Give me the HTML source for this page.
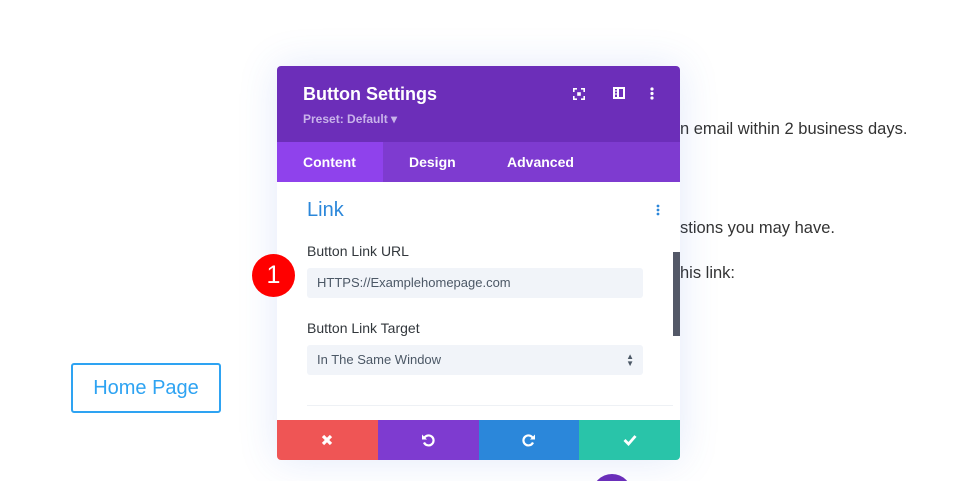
<!DOCTYPE html>
<html style="width:961px;height:481px;overflow:hidden"><head><style>
*{margin:0;padding:0;box-sizing:border-box}
body{width:961px;height:481px;background:#fff;position:relative;overflow:hidden;font-family:"Liberation Sans",sans-serif}
.t{position:absolute;font-size:16.5px;color:#333}
.modal{position:absolute;left:277px;top:66px;width:403px;height:394px;background:#fff;border-radius:4px;box-shadow:0 0 40px rgba(60,110,220,.15);overflow:hidden}
.hd{height:76px;background:#6c2eb9;position:relative}
.tabs{height:40px;background:#7e3bd0;position:relative}
.tab{position:absolute;top:0;height:40px;line-height:40px;color:#fff;font-weight:bold;font-size:14px}
.lbl{position:absolute;left:30px;font-size:14px;color:#32373c}
.inp{position:absolute;left:30px;width:336px;height:30px;background:#f1f4f9;border-radius:3px;font-size:13px;color:#4c5866;line-height:30px;padding-left:10px}
.ft{position:absolute;top:354px;height:40px;width:101px}
</style></head><body>
<div class="t" style="left:680px;top:120px">n email within 2 business days.</div>
<div class="t" style="left:680px;top:219px">stions you may have.</div>
<div class="t" style="left:680px;top:264px">his link:</div>
<div style="position:absolute;left:71px;top:363px;width:150px;height:50px;border:2px solid #2ea3f2;border-radius:3px;color:#2ea3f2;font-size:20px;line-height:46px;text-align:center">Home Page</div>
<div style="position:absolute;left:592px;top:474px;width:40px;height:7px;overflow:hidden"><div style="width:40px;height:40px;border-radius:50%;background:#6c2eb9"></div></div>
<div class="modal">
 <div class="hd">
  <div style="position:absolute;left:26px;top:18px;color:#fff;font-weight:bold;font-size:18px">Button Settings</div>
  <div style="position:absolute;left:26px;top:46px;color:#c8b3ea;font-weight:bold;font-size:12px">Preset: Default ▾</div>
  <svg style="position:absolute;left:296px;top:22px" width="12" height="12" viewBox="0 0 12 12" fill="none" stroke="#fff" stroke-width="1.6"><path d="M0.8 4V0.8H4M8 0.8H11.2V4M11.2 8V11.2H8M4 11.2H0.8V8"/><rect x="4.2" y="4.2" width="3.6" height="3.6" fill="#fff" stroke="none"/></svg>
  <svg style="position:absolute;left:336px;top:21px" width="12" height="12" viewBox="0 0 12 12"><path d="M1 1h10v10H1z" fill="none" stroke="#fff" stroke-width="2"/><path d="M5 1v10" stroke="#fff" stroke-width="2"/><path d="M2 4h3M2 7h3" stroke="#fff"/></svg>
  <svg style="position:absolute;left:373px;top:21px" width="4" height="13"><circle cx="2" cy="2" r="1.6" fill="#fff"/><circle cx="2" cy="6.5" r="1.6" fill="#fff"/><circle cx="2" cy="11" r="1.6" fill="#fff"/></svg>
 </div>
 <div class="tabs">
  <div style="position:absolute;left:0;top:0;width:106px;height:40px;background:#8f42ec"></div>
  <div class="tab" style="left:26px">Content</div>
  <div class="tab" style="left:132px">Design</div>
  <div class="tab" style="left:230px">Advanced</div>
 </div>
 <div style="position:absolute;left:30px;top:133px;font-size:20px;color:#2b87da">Link</div>
 <svg style="position:absolute;left:379px;top:138px" width="4" height="12"><circle cx="2" cy="2" r="1.4" fill="#2b87da"/><circle cx="2" cy="6" r="1.4" fill="#2b87da"/><circle cx="2" cy="10" r="1.4" fill="#2b87da"/></svg>
 <div class="lbl" style="top:177px">Button Link URL</div>
 <div class="inp" style="top:202px">HTTPS://Examplehomepage.com</div>
 <div class="lbl" style="top:254px">Button Link Target</div>
 <div class="inp" style="top:279px">In The Same Window<span style="position:absolute;right:9px;top:0;font-size:8px;line-height:7px;padding-top:8px;color:#4c5866">▲<br>▼</span></div>
 <div style="position:absolute;left:396px;top:186px;width:7px;height:84px;background:#535867"></div>
 <div style="position:absolute;left:30px;top:339px;width:366px;height:1px;background:#eef1f5"></div>
 <div class="ft" style="left:0;background:#ef5555"><svg style="position:absolute;left:44px;top:14px" width="12" height="12"><path d="M2 2l8 8M10 2l-8 8" stroke="#fff" stroke-width="3.2"/></svg></div>
 <div class="ft" style="left:101px;background:#7e3bd0"><svg style="position:absolute;left:43px;top:13px" width="14" height="14" viewBox="0 0 14 14"><path d="M3.5 4.5A5 5 0 1 1 3 9.5" fill="none" stroke="#fff" stroke-width="2.2"/><path d="M1 1.5v5h5z" fill="#fff"/></svg></div>
 <div class="ft" style="left:202px;width:100px;background:#2b87da"><svg style="position:absolute;left:43px;top:13px" width="14" height="14" viewBox="0 0 14 14"><path d="M10.5 4.5A5 5 0 1 0 11 9.5" fill="none" stroke="#fff" stroke-width="2.2"/><path d="M13 1.5v5H8z" fill="#fff"/></svg></div>
 <div class="ft" style="left:302px;background:#29c4a9"><svg style="position:absolute;left:44px;top:14px" width="14" height="12"><path d="M1.5 6l4 4 7-8" fill="none" stroke="#fff" stroke-width="2.8"/></svg></div>
</div>
<div style="position:absolute;left:252px;top:254px;width:43px;height:43px;border-radius:50%;background:#f00;color:#fff;font-size:25px;text-align:center;line-height:43px">1</div>
</body></html>
